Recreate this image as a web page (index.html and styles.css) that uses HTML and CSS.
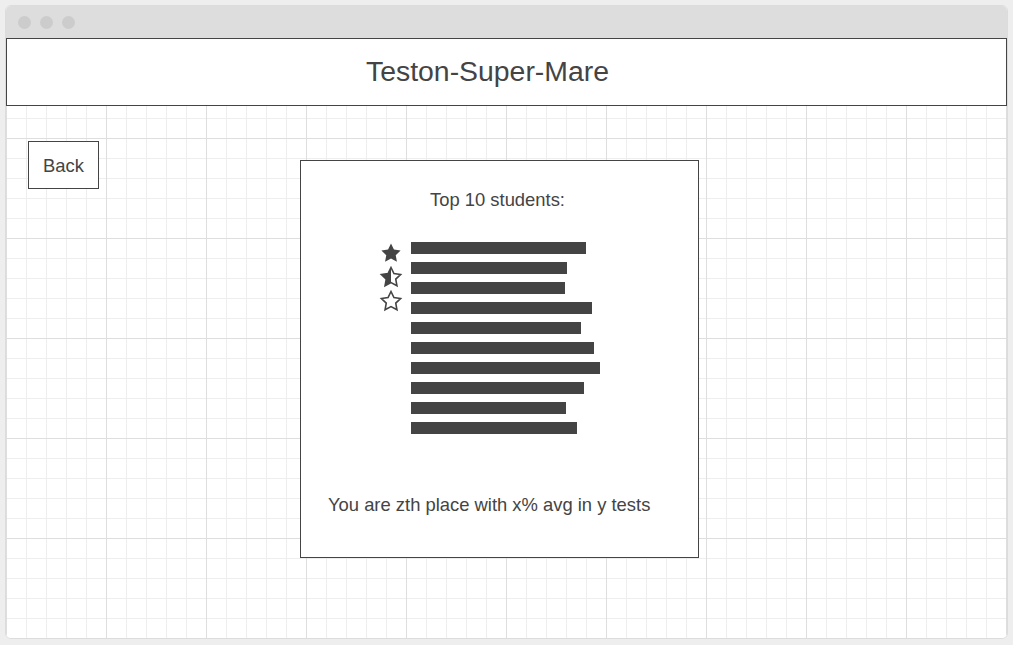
FILE: index.html
```html
<!DOCTYPE html>
<html>
<head>
<meta charset="utf-8">
<link rel="stylesheet" href="styles.css">
</head>
<body>
<div class="window">
  <div class="titlebar">
    <span class="dot"></span><span class="dot"></span><span class="dot"></span>
  </div>
  <div class="page">
    <header class="header">Teston-Super-Mare</header>
    <div class="content">
      <button class="back">Back</button>
      <section class="card">
        <h2 class="card-title">Top 10 students:</h2>
        <div class="chart">
          <div class="stars">
            <svg class="star" viewBox="0 0 24 24"><path class="fill" d="M12 2.5l2.94 6.1 6.66.9-4.86 4.64 1.2 6.62L12 17.56l-5.94 3.2 1.2-6.62L2.4 9.5l6.66-.9z"/></svg>
            <svg class="star" viewBox="0 0 24 24">
              <defs><clipPath id="half"><rect x="0" y="0" width="12" height="24"/></clipPath></defs>
              <path class="fill" clip-path="url(#half)" d="M12 2.5l2.94 6.1 6.66.9-4.86 4.64 1.2 6.62L12 17.56l-5.94 3.2 1.2-6.62L2.4 9.5l6.66-.9z"/>
              <path class="outline" d="M12 2.5l2.94 6.1 6.66.9-4.86 4.64 1.2 6.62L12 17.56l-5.94 3.2 1.2-6.62L2.4 9.5l6.66-.9z"/>
            </svg>
            <svg class="star" viewBox="0 0 24 24"><path class="outline" d="M12 2.5l2.94 6.1 6.66.9-4.86 4.64 1.2 6.62L12 17.56l-5.94 3.2 1.2-6.62L2.4 9.5l6.66-.9z"/></svg>
          </div>
          <div class="bars">
            <div class="bar" style="width:175px"></div>
            <div class="bar" style="width:156px"></div>
            <div class="bar" style="width:154px"></div>
            <div class="bar" style="width:181px"></div>
            <div class="bar" style="width:170px"></div>
            <div class="bar" style="width:183px"></div>
            <div class="bar" style="width:189px"></div>
            <div class="bar" style="width:173px"></div>
            <div class="bar" style="width:155px"></div>
            <div class="bar" style="width:166px"></div>
          </div>
        </div>
        <p class="summary">You are zth place with x% avg in y tests</p>
      </section>
    </div>
  </div>
</div>
</body>
</html>
```

FILE: styles.css
```css
* { box-sizing: border-box; }

html, body {
  margin: 0;
  padding: 0;
  background: #eeeeee;
  font-family: "Liberation Sans", Arial, sans-serif;
  color: #444444;
}

body {
  padding: 5px;
  height: 645px;
}

.window {
  width: 1003px;
  height: 634px;
  border: 1px solid #dcdcdc;
  border-radius: 6px;
  background: #ffffff;
  overflow: hidden;
  display: flex;
  flex-direction: column;
}

.titlebar {
  height: 32px;
  background: #dddddd;
  display: flex;
  align-items: center;
  gap: 9px;
  padding: 1px 0 0 12px;
  flex: none;
}

.dot {
  width: 13px;
  height: 13px;
  border-radius: 50%;
  background: #cccccc;
}

.page {
  flex: 1;
  background-color: #ffffff;
  background-image:
    linear-gradient(to right, #dedede 1px, transparent 1px),
    linear-gradient(to bottom, #dedede 1px, transparent 1px),
    linear-gradient(to right, #eeeeee 1px, transparent 1px),
    linear-gradient(to bottom, #eeeeee 1px, transparent 1px);
  background-size: 100px 100px, 100px 100px, 20px 20px, 20px 20px;
}

.header {
  height: 68px;
  border: 1px solid #444444;
  background: #ffffff;
  display: flex;
  align-items: center;
  justify-content: center;
  font-size: 28.4px;
  padding: 0 38px 1px 0;
}

.content {
  display: flex;
  align-items: flex-start;
  padding: 35px 0 0 22px;
}

.back {
  width: 71px;
  height: 48px;
  border: 1px solid #444444;
  background: #ffffff;
  font-family: "Liberation Sans", Arial, sans-serif;
  font-size: 18.4px;
  color: #444444;
  padding: 2px 0 0;
  margin: 0;
}

.card {
  margin: 19px 0 0 201px;
  width: 399px;
  height: 398px;
  border: 1px solid #444444;
  background: #ffffff;
  display: flex;
  flex-direction: column;
}

.card-title {
  margin: 28px 0 0;
  font-size: 18.4px;
  font-weight: normal;
  line-height: 21px;
  text-align: center;
  padding-right: 4px;
}

.chart {
  display: flex;
  gap: 8px;
  margin: 32px 0 0 78px;
}

.stars {
  width: 24px;
  display: flex;
  flex-direction: column;
  margin-top: -1px;
}

.star {
  width: 24px;
  height: 24px;
  display: block;
}

.star .fill { fill: #444444; }
.star .outline { fill: none; stroke: #444444; stroke-width: 1.6; stroke-linejoin: miter; }

.bars {
  display: flex;
  flex-direction: column;
  gap: 8px;
}

.bar {
  height: 12px;
  background: #444444;
}

.summary {
  margin: 60px 0 0 27px;
  font-size: 18.4px;
  line-height: 21px;
}
```
